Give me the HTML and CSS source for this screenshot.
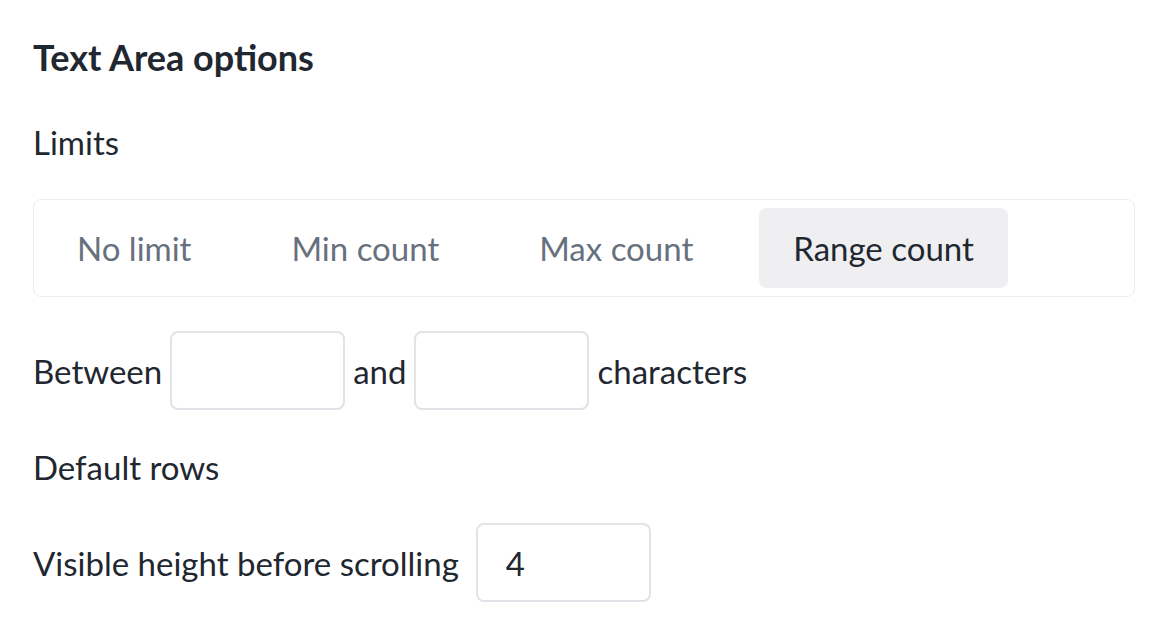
FILE: index.html
```html
<!DOCTYPE html>
<html lang="en">
<head>
  <meta charset="UTF-8">
  <meta name="viewport" content="width=device-width, initial-scale=1.0">
  <title>Text Area options</title>
  <link rel="stylesheet" href="styles.css">
</head>
<body>
  <div class="panel">
    <h2 class="panel-title">Text Area options</h2>

    <div class="field-label">Limits</div>
    <div class="segmented">
      <button type="button" class="segment">No limit</button>
      <button type="button" class="segment">Min count</button>
      <button type="button" class="segment">Max count</button>
      <button type="button" class="segment active">Range count</button>
    </div>

    <div class="inline-row">
      <span>Between</span>
      <input type="text" class="num-input">
      <span>and</span>
      <input type="text" class="num-input">
      <span>characters</span>
    </div>

    <div class="field-label">Default rows</div>
    <div class="inline-row">
      <span>Visible height before scrolling</span>
      <input type="text" class="num-input wide-gap" value="4">
    </div>
  </div>
</body>
</html>
```

FILE: styles.css
```css
body {
  margin: 0;
  background: #fff;
  color: #1f2730;
  font-family: "Lato", "Noto Sans", sans-serif;
}

.panel {
  padding: 35px 29px 0 33px;
  display: flex;
  flex-direction: column;
}

.panel-title {
  margin: 0;
  font-size: 36px;
  font-weight: 700;
  line-height: 44px;
}

.field-label {
  font-size: 33px;
  line-height: 40px;
  margin-top: 43px;
}

.segmented {
  margin-top: 37px;
  display: flex;
  gap: 32px;
  padding: 8px 9px;
  border: 1px solid #ebedf0;
  border-radius: 8px;
}

.segment {
  font-family: inherit;
  font-size: 33px;
  color: #67717d;
  background: none;
  border: none;
  border-radius: 8px;
  padding: 0 34px;
  height: 80px;
  cursor: pointer;
}

.segment.active {
  background: #efeff2;
  color: #1f2730;
}

.inline-row {
  display: flex;
  align-items: center;
  gap: 8px;
  font-size: 33px;
  margin-top: 34px;
}

.field-label + .inline-row {
  margin-top: 36px;
}

.inline-row + .field-label {
  margin-top: 37px;
}

.num-input {
  width: 175px;
  height: 79px;
  box-sizing: border-box;
  border: 2px solid #e0e3e7;
  border-radius: 8px;
  font-family: inherit;
  font-size: 33px;
  color: #1f2730;
  padding: 0 28px;
  outline: none;
}

.num-input.wide-gap {
  margin-left: 9px;
}
```
